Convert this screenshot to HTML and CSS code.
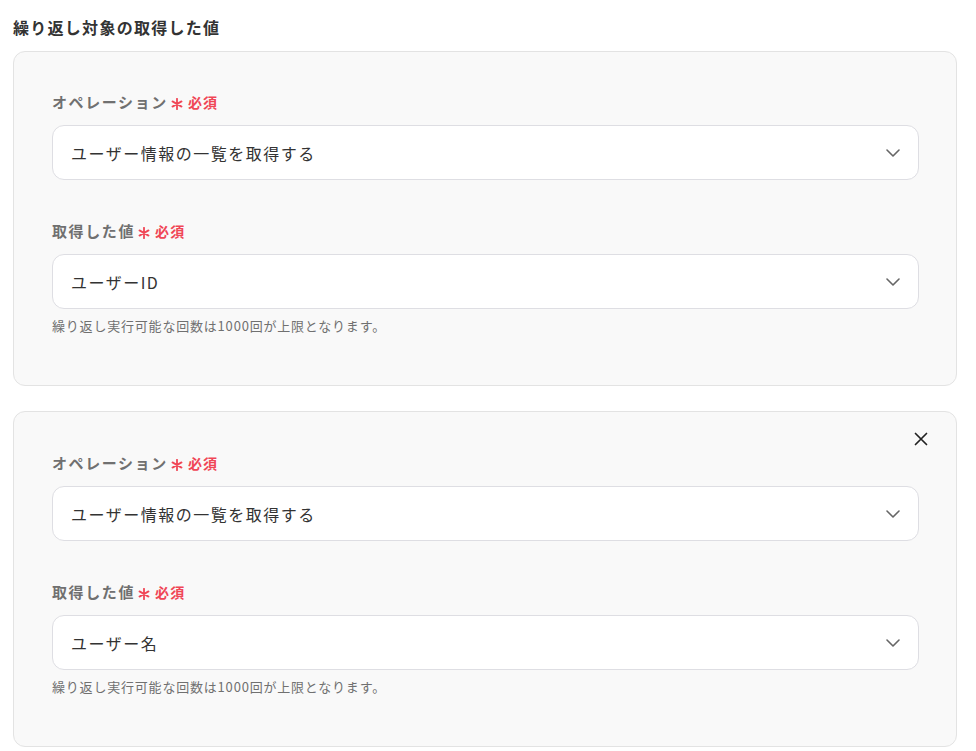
FILE: index.html
```html
<!DOCTYPE html>
<html lang="ja">
<head>
    <meta charset="utf-8" />
    <link rel="stylesheet" href="styles.css">
</head>
<body>
    <div class="loop-form">
        <h2 class="section-title">繰り返し対象の取得した値</h2>

        <div class="op-card">
            <div class="field">
                <label class="field-label">オペレーション<span class="req"><svg class="star" width="12" height="12" viewBox="0 0 12 12"><path d="M6 0.8v10.4M1.5 3.4l9 5.2M10.5 3.4l-9 5.2" stroke="#f04656" stroke-width="1.8" stroke-linecap="round"/></svg>必須</span></label>
                <div class="select-box">
                    <span>ユーザー情報の一覧を取得する</span>
                    <svg class="chev" width="14" height="8" viewBox="0 0 14 8"><path d="M1 1l6 6 6-6" fill="none" stroke="#666" stroke-width="1.6" stroke-linecap="round" stroke-linejoin="round"/></svg>
                </div>
            </div>
            <div class="field">
                <label class="field-label">取得した値<span class="req"><svg class="star" width="12" height="12" viewBox="0 0 12 12"><path d="M6 0.8v10.4M1.5 3.4l9 5.2M10.5 3.4l-9 5.2" stroke="#f04656" stroke-width="1.8" stroke-linecap="round"/></svg>必須</span></label>
                <div class="select-box">
                    <span>ユーザーID</span>
                    <svg class="chev" width="14" height="8" viewBox="0 0 14 8"><path d="M1 1l6 6 6-6" fill="none" stroke="#666" stroke-width="1.6" stroke-linecap="round" stroke-linejoin="round"/></svg>
                </div>
                <p class="help">繰り返し実行可能な回数は1000回が上限となります。</p>
            </div>
        </div>

        <div class="op-card removable">
            <button class="close-btn" type="button">
                <svg width="14" height="14" viewBox="0 0 14 14"><path d="M1.5 1.5l11 11M12.5 1.5l-11 11" stroke="#222" stroke-width="1.7" stroke-linecap="round"/></svg>
            </button>
            <div class="field">
                <label class="field-label">オペレーション<span class="req"><svg class="star" width="12" height="12" viewBox="0 0 12 12"><path d="M6 0.8v10.4M1.5 3.4l9 5.2M10.5 3.4l-9 5.2" stroke="#f04656" stroke-width="1.8" stroke-linecap="round"/></svg>必須</span></label>
                <div class="select-box">
                    <span>ユーザー情報の一覧を取得する</span>
                    <svg class="chev" width="14" height="8" viewBox="0 0 14 8"><path d="M1 1l6 6 6-6" fill="none" stroke="#666" stroke-width="1.6" stroke-linecap="round" stroke-linejoin="round"/></svg>
                </div>
            </div>
            <div class="field">
                <label class="field-label">取得した値<span class="req"><svg class="star" width="12" height="12" viewBox="0 0 12 12"><path d="M6 0.8v10.4M1.5 3.4l9 5.2M10.5 3.4l-9 5.2" stroke="#f04656" stroke-width="1.8" stroke-linecap="round"/></svg>必須</span></label>
                <div class="select-box">
                    <span>ユーザー名</span>
                    <svg class="chev" width="14" height="8" viewBox="0 0 14 8"><path d="M1 1l6 6 6-6" fill="none" stroke="#666" stroke-width="1.6" stroke-linecap="round" stroke-linejoin="round"/></svg>
                </div>
                <p class="help">繰り返し実行可能な回数は1000回が上限となります。</p>
            </div>
        </div>
    </div>
</body>
</html>
```

FILE: styles.css
```css
* {
    padding: 0;
    margin: 0;
    box-sizing: border-box;
}

body {
    background: #fff;
    font-family: "Noto Sans CJK JP", "Noto Sans", sans-serif;
    color: #333;
    letter-spacing: 0.08em;
}

.loop-form {
    width: 944px;
    margin-left: 13px;
    padding-top: 15px;
}

.section-title {
    font-size: 16px;
    font-weight: bold;
    line-height: 24px;
    color: #333;
    margin-bottom: 12px;
}

.op-card {
    position: relative;
    background: #f9f9f9;
    border: 1px solid #e3e3e3;
    border-radius: 12px;
    padding: 40px 37px 50px 38px;
    margin-bottom: 25px;
}

.op-card.removable {
    padding-top: 41px;
}

.close-btn {
    position: absolute;
    top: 19px;
    right: 27px;
    width: 16px;
    height: 16px;
    border: none;
    background: none;
    display: flex;
    align-items: center;
    justify-content: center;
}

.field + .field {
    margin-top: 41px;
}

.field-label {
    display: flex;
    align-items: center;
    font-size: 15px;
    font-weight: bold;
    line-height: 20px;
    color: #707070;
    letter-spacing: 1.6px;
    margin-bottom: 13px;
}

.req {
    display: flex;
    align-items: center;
    color: #f04656;
    font-size: 14px;
    letter-spacing: 1.2px;
    margin-left: 3px;
}

.star {
    margin-right: 5px;
    position: relative;
    top: 2px;
}

.select-box {
    display: flex;
    align-items: center;
    justify-content: space-between;
    height: 55px;
    background: #fff;
    border: 1px solid #dedee3;
    border-radius: 12px;
    padding: 0 18px 0 18px;
    font-size: 16px;
    letter-spacing: 1.5px;
    color: #333;
}

.help {
    font-size: 13px;
    line-height: 18px;
    color: #707070;
    letter-spacing: 0.8px;
    margin-top: 8px;
}
```
